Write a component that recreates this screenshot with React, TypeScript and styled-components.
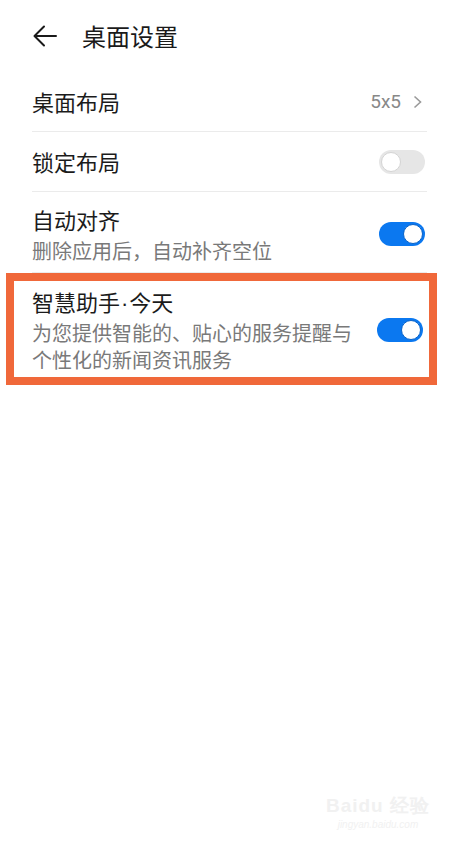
import React from "react";
import styled, { createGlobalStyle } from "styled-components";

const GlobalStyle = createGlobalStyle`
  html, body {
    margin: 0;
    padding: 0;
    background: #ffffff;
  }
  body {
    font-family: "Noto Sans CJK SC", "Noto Sans", sans-serif;
    color: #1b1b1b;
  }
`;

const Page = styled.div`
  position: relative;
  width: 458px;
  height: 845px;
  overflow: hidden;
  background: #fff;
`;

const Header = styled.div`
  height: 72px;
  display: flex;
  align-items: center;
  padding-left: 33px;
  gap: 25px;
  box-sizing: border-box;
`;

const Title = styled.div`
  font-size: 24px;
  line-height: 1;
  color: #1a1a1a;
`;

const List = styled.div`
  padding: 0 31px 0 32px;
`;

const Row = styled.div<{ $divider?: boolean; $tall?: boolean }>`
  display: flex;
  align-items: center;
  justify-content: space-between;
  min-height: ${({ $tall }) => ($tall ? "auto" : "60px")};
  padding: ${({ $tall }) => ($tall ? "12px 0 8px" : "0")};
  border-bottom: ${({ $divider }) => ($divider ? "1px solid #ebebeb" : "none")};
  box-sizing: border-box;
`;

const Texts = styled.div`
  display: flex;
  flex-direction: column;
`;

const Label = styled.div`
  font-size: 22px;
  line-height: 31px;
  color: #1b1b1b;
`;

const Dot = styled.span`
  font-family: "Liberation Sans", sans-serif;
  margin: 0 1px;
`;

const Sub = styled.div<{ $gap?: number }>`
  font-size: 20px;
  line-height: 27px;
  margin-top: ${({ $gap }) => $gap ?? 0}px;
  color: #797979;
`;

const Value = styled.div`
  display: flex;
  align-items: center;
  gap: 12px;
  font-size: 19px;
  color: #888888;
  font-family: "Roboto", "Noto Sans", sans-serif;
  margin-right: 5px;
`;

const Highlight = styled.div`
  margin: 0 -10px 0 -26px;
  border: 8px solid #f0683a;
  padding: 5px 4px 4px 18px;
`;

const Switch = styled.div<{ $on?: boolean }>`
  flex: none;
  width: 46px;
  height: 24px;
  border-radius: 12px;
  margin-right: 2px;
  background: ${({ $on }) => ($on ? "#0b78f0" : "#e6e6e6")};
  display: flex;
  align-items: center;
  justify-content: ${({ $on }) => ($on ? "flex-end" : "flex-start")};
  padding: 0 2px;
  box-sizing: border-box;
`;

const Knob = styled.div<{ $on?: boolean }>`
  width: 20px;
  height: 20px;
  border-radius: 50%;
  background: #fff;
  box-sizing: border-box;
  border: 1px solid ${({ $on }) => ($on ? "#0a63c8" : "#d4d4d4")};
`;

const Watermark = styled.div`
  position: absolute;
  right: 28px;
  bottom: 15px;
  display: flex;
  flex-direction: column;
  align-items: center;
  color: #f1f1f1;
  font-family: "Liberation Sans", sans-serif;
`;

const MarkTop = styled.div`
  font-size: 19px;
  font-weight: bold;
  letter-spacing: 1px;
`;

const MarkBottom = styled.div`
  font-size: 10px;
  font-style: italic;
`;

const Back = () => (
  <svg width="24" height="22" viewBox="0 0 24 22" fill="none">
    <path
      d="M23 11H2M11 1.5L1.5 11L11 20.5"
      stroke="#1a1a1a"
      strokeWidth="2"
      strokeLinecap="round"
      strokeLinejoin="round"
    />
  </svg>
);

const Chevron = () => (
  <svg width="9" height="14" viewBox="0 0 9 14" fill="none">
    <path d="M1.5 1.5L7.5 7L1.5 12.5" stroke="#9a9a9a" strokeWidth="1.6" />
  </svg>
);

const Toggle = ({ on }: { on?: boolean }) => (
  <Switch $on={on}>
    <Knob $on={on} />
  </Switch>
);

export default function App() {
  return (
    <Page>
      <GlobalStyle />
      <Header>
        <Back />
        <Title>桌面设置</Title>
      </Header>
      <List>
        <Row $divider>
          <Label>桌面布局</Label>
          <Value>
            5x5
            <Chevron />
          </Value>
        </Row>
        <Row $divider>
          <Label>锁定布局</Label>
          <Toggle />
        </Row>
        <Row $divider $tall>
          <Texts>
            <Label>自动对齐</Label>
            <Sub $gap={2}>删除应用后，自动补齐空位</Sub>
          </Texts>
          <Toggle on />
        </Row>
        <Highlight>
          <Row $tall style={{ padding: 0 }}>
            <Texts>
              <Label>
                智慧助手<Dot>·</Dot>今天
              </Label>
              <Sub>
                为您提供智能的、贴心的服务提醒与
                <br />
                个性化的新闻资讯服务
              </Sub>
            </Texts>
            <Toggle on />
          </Row>
        </Highlight>
      </List>
      <Watermark>
        <MarkTop>Baidu 经验</MarkTop>
        <MarkBottom>jingyan.baidu.com</MarkBottom>
      </Watermark>
    </Page>
  );
}
